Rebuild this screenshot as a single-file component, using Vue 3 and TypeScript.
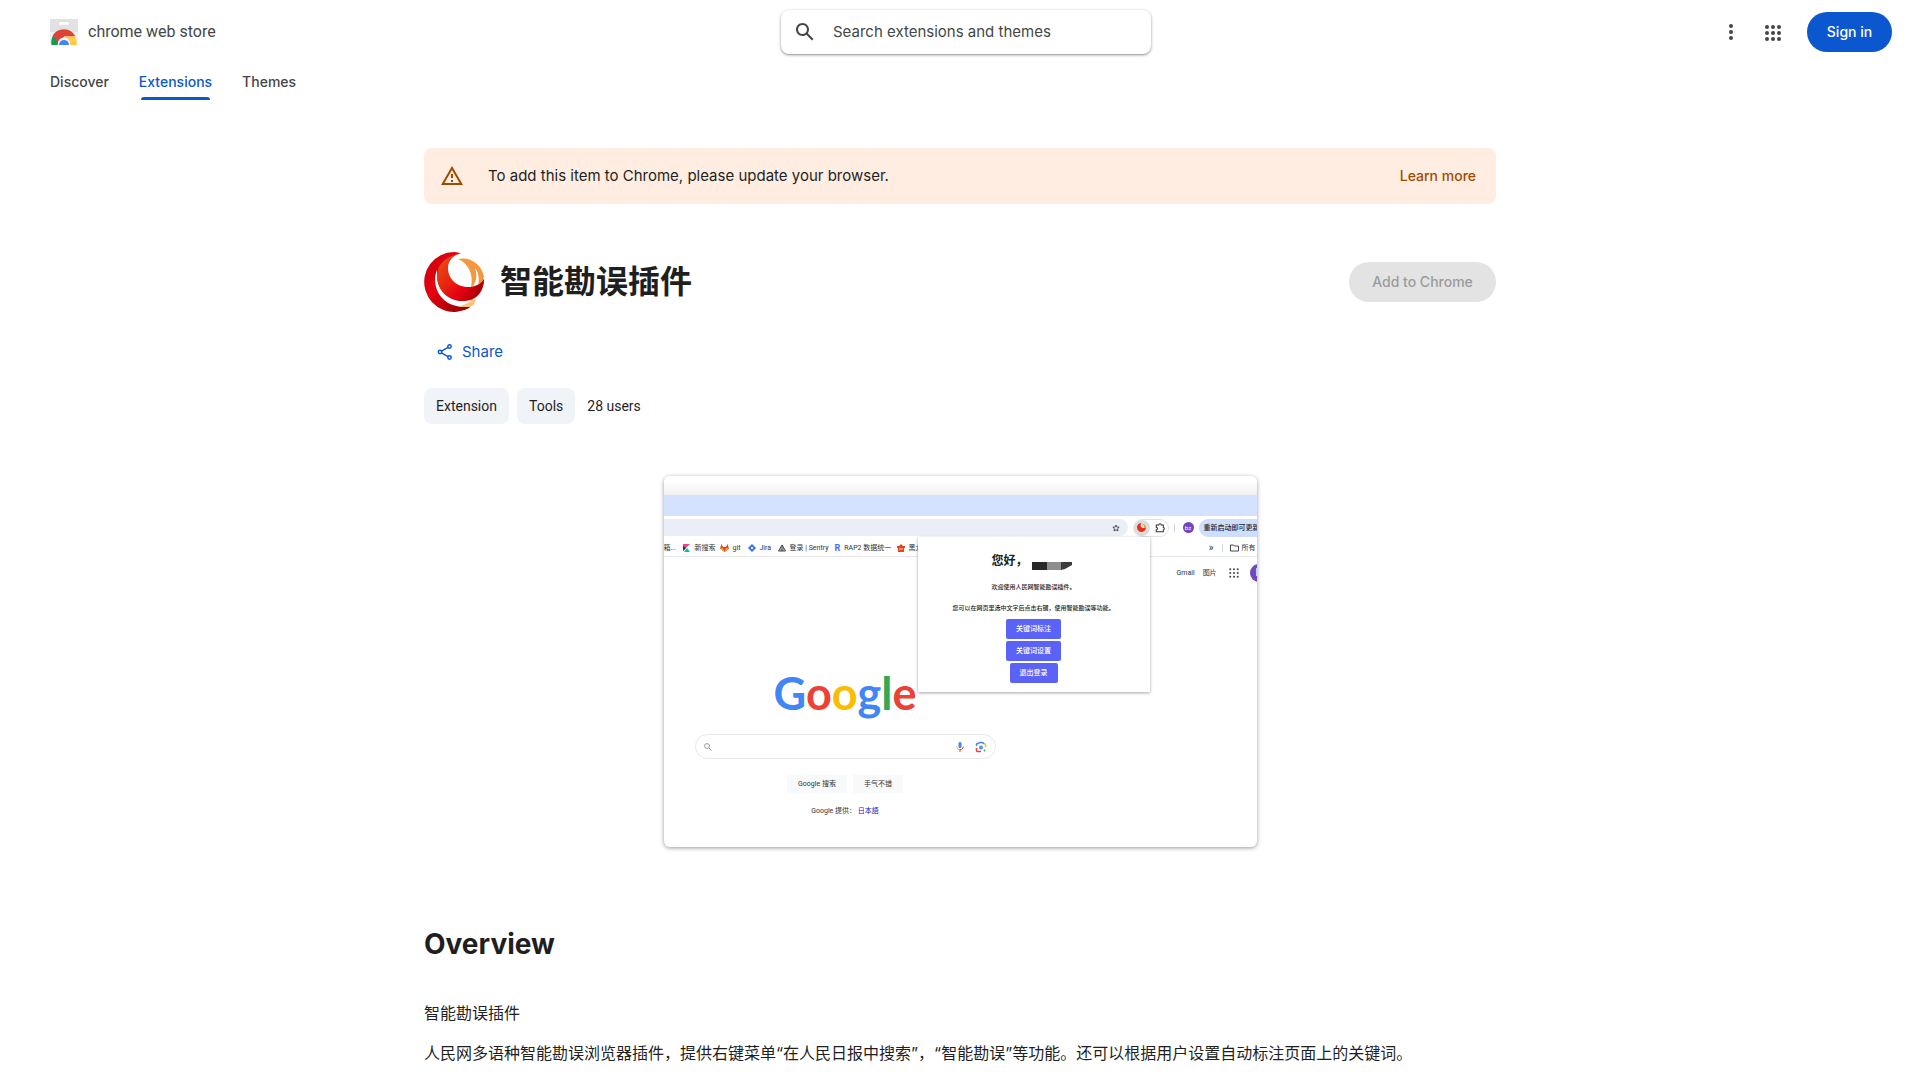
<script setup lang="ts">
interface Tab { label: string; active: boolean }

const tabs: Tab[] = [
  { label: 'Discover', active: false },
  { label: 'Extensions', active: true },
  { label: 'Themes', active: false },
]

const popupActions: string[] = ['关键词标注', '关键词设置', '退出登录']
const dots: number[] = [6, 12, 18]
</script>

<template>
  <div class="page">
    <header class="header">
      <div class="bar">
        <a class="brand" href="#">
          <svg width="28" height="26" viewBox="0 0 28 26" aria-hidden="true">
            <path d="M0 0h28v24a2 2 0 0 1-2 2H2a2 2 0 0 1-2-2z" fill="#f1f1f1" />
            <path d="M0 0h28v13H0z" fill="#e2e2e2" />
            <rect x="9" y="3" width="10" height="3" rx="1.5" fill="#fff" />
            <path d="M2.500 17A13 13 0 0 1 25.500 17.500H14L8 26z" fill="#db4437" />
            <path d="M3.200 16.500 9 26H1.500a13 13 0 0 1 1.700-9.500z" fill="#0f9d58" />
            <path d="M14 17.500h11.100a13 13 0 0 1 1.400 8.500H14z" fill="#ffcd40" />
            <path d="M7.800 26a6.300 6.300 0 1 1 12.400 0z" fill="#f1f1f1" />
            <path d="M9 26a5 5 0 1 1 10 0z" fill="#4285f4" />
          </svg>
          <span>chrome web store</span>
        </a>
        <label class="search">
          <svg width="24" height="24" viewBox="0 0 24 24" aria-hidden="true">
            <path fill="#444746" d="M20.490 19l-5.730-5.730C15.530 12.200 16 10.910 16 9.500 16 5.910 13.090 3 9.500 3S3 5.910 3 9.500 5.910 16 9.500 16c1.410 0 2.700-.470 3.770-1.240L19 20.490 20.490 19zM5 9.500C5 7.010 7.010 5 9.500 5S14 7.010 14 9.500 11.990 14 9.500 14 5 11.990 5 9.500z" />
          </svg>
          <input type="text" placeholder="Search extensions and themes" aria-label="Search extensions and themes">
        </label>
        <div class="actions">
          <button class="icon-button" type="button" aria-label="More options">
            <svg width="24" height="24" viewBox="0 0 24 24"><circle v-for="y in dots" :key="y" cx="12" :cy="y" r="2" /></svg>
          </button>
          <button class="icon-button" type="button" aria-label="Google apps">
            <svg width="24" height="24" viewBox="0 0 24 24">
              <template v-for="y in dots" :key="y"><circle v-for="x in dots" :key="x" :cx="x" :cy="y + 1" r="2" /></template>
            </svg>
          </button>
          <a class="sign-in" href="#">Sign in</a>
        </div>
      </div>
      <nav class="tabs">
        <a v-for="tab in tabs" :key="tab.label" href="#" :class="{ active: tab.active }">{{ tab.label }}</a>
      </nav>
    </header>

    <main class="content">
      <section class="banner">
        <svg width="24" height="24" viewBox="0 0 24 24" aria-hidden="true">
          <path fill="#a14b00" d="M12 5.990 19.530 19H4.470L12 5.990M12 2 1 21h22L12 2zm1 14h-2v2h2v-2zm0-6h-2v4h2v-4z" />
        </svg>
        <p>To add this item to Chrome, please update your browser.</p>
        <a href="#">Learn more</a>
      </section>

      <section class="item-head">
        <svg class="item-icon" width="60" height="60" viewBox="0 0 60 60" aria-hidden="true">
          <defs>
            <linearGradient id="ball" x1="0" y1="0" x2="1" y2="1">
              <stop offset="0" stop-color="#c4000f" /><stop offset=".4" stop-color="#e60012" /><stop offset="1" stop-color="#8c0000" />
            </linearGradient>
            <linearGradient id="flame" x1="0" y1="0" x2="1" y2="1">
              <stop offset="0" stop-color="#ea5514" /><stop offset=".45" stop-color="#e6210f" /><stop offset=".65" stop-color="#e60012" /><stop offset="1" stop-color="#8c0000" />
            </linearGradient>
          </defs>
          <path fill="url(#ball)" d="M37 1.500Q34 0 30 0A30 30 0 1 0 46 55.500L39 49C25 40 21 22 24 12 27 5 32 2 37 1.500z" />
          <path fill="#fff" d="M13 18C9 27 11 40 20 48 27 54 36 56 46 54L52 49 39 49C26 49 14 40 13 24z" />
          <path fill="url(#flame)" d="M37 1.500C24 3 13 11 13 24 13 39 25 49 39 49 50 49 60 41 60 27 56 33 50 35 44 35 32 35 24 26 24 16 24 8 29 3 37 1.500z" />
          <path fill="#f3983f" d="M34 7C47 4 58 13 60 25 59 29 57 31 54 33 56 26 54 20 51 16 53 22 53 29 49 34L47 35C50 22 44 11 34 7z" />
          <path fill="#f8c47d" d="M52 47C51 51 49 54 46 55L33 55C41 53 46 50 48 48z" />
          <path fill="#a80008" opacity=".65" d="M60 27C60 39 54 46 45 49 50 44 52 39 52 34 56 32 58 30 60 27z" />
        </svg>
        <h1>智能勘误插件</h1>
        <button class="add" type="button" disabled>Add to Chrome</button>
      </section>

      <button class="share" type="button">
        <svg width="18" height="18" viewBox="0 0 18 18" fill="none" stroke="#0b57d0" stroke-width="1.500" aria-hidden="true">
          <circle cx="13.500" cy="3.500" r="1.700" /><circle cx="4" cy="9" r="1.700" /><circle cx="13.500" cy="14.500" r="1.700" />
          <path d="M5.500 8.100 12 4.400M5.500 9.900 12 13.600" />
        </svg>
        Share
      </button>

      <div class="meta">
        <a class="chip" href="#">Extension</a>
        <a class="chip" href="#">Tools</a>
        <span class="users">28 users</span>
      </div>

      <figure class="shot">
        <div class="shot-title"></div>
        <div class="shot-strip"></div>
        <div class="shot-toolbar">
          <div class="omnibox">
            <svg width="8" height="8" viewBox="0 0 24 24"><path fill="none" stroke="#333" stroke-width="2.500" d="m12 3 2.700 6.200 6.700.600-5 4.500 1.500 6.600L12 17.400l-5.900 3.500 1.500-6.600-5-4.500 6.700-.600z" /></svg>
          </div>
          <div class="ext">
            <span class="ext-on">
              <svg width="9" height="9" viewBox="0 0 60 60"><path fill="#e6301c" d="M30 0a30 30 0 1 0 30 28c-8 10-36 8-36-12C24 8 26 3 30 0z" /><path fill="#f3983f" d="M34 7c14-3 25 7 26 20-3 5-8 8-13 8 3-13-3-24-13-28z" /></svg>
            </span>
            <svg width="10" height="10" viewBox="0 0 24 24"><path fill="none" stroke="#333" stroke-width="2.500" d="M3 5h6c0-4 6-4 6 0h5v6c3 0 3 6 0 6v4H3v-5c4 0 4-6 0-6z" /></svg>
          </div>
          <i class="rule"></i>
          <span class="avatar">bz</span>
          <span class="relaunch">重新启动即可更新</span>
        </div>
        <div class="shot-marks">
          <span class="mark first">箱...</span>
          <span class="mark w-search"><svg width="8" height="8" viewBox="0 0 8 8"><path fill="#e8488b" d="M0 0h7L0 7z" /><path fill="#333" d="M0 2l3 2-3 3z" /><path fill="#00bfb3" d="M1 8 4 4l3 4z" /></svg>新搜索</span>
          <span class="mark w-git"><svg width="9" height="8" viewBox="0 0 9 8"><path fill="#e24329" d="M1.500 0 3 3h3l1.500-3L9 4.500 4.500 8 0 4.500z" /><path fill="#fca326" d="M0 4.500 3 4l1.500 4L6 4l3 .5L4.500 8z" /></svg>git</span>
          <span class="mark w-jira"><svg width="8" height="8" viewBox="0 0 8 8"><path fill="#2f6df6" fill-rule="evenodd" d="m4 0 4 4-4 4-4-4zm0 2.500L2.500 4 4 5.500 5.500 4z" /></svg>Jira</span>
          <span class="mark w-sentry"><svg width="8" height="8" viewBox="0 0 8 8"><path fill="#777" stroke="#444" d="M4 1 7.500 7h-7z" /><path stroke="#eee" d="M2 7c0-2 1-3 2-3s2 1 2 3" fill="none" stroke-width=".5" /></svg>登录 | Sentry</span>
          <span class="mark w-rap"><b>R</b>RAP2 数据统一</span>
          <span class="mark"><svg width="8" height="8" viewBox="0 0 8 8"><path fill="#e5451f" d="M0 2h2l2-2 2 2h2v2H0zM1 4h6v4H1z" /><path d="M2 5h4" stroke="#ffd27a" /></svg>黑龙</span>
          <span class="mark more">»</span>
          <i class="rule"></i>
          <span class="mark folder"><svg width="9" height="8" viewBox="0 0 9 8"><path fill="none" stroke="#444" d="M.5 1h3l1 1h4v5h-8z" /></svg>所有</span>
        </div>
        <div class="shot-links">
          <span>Gmail</span><span>图片</span>
          <svg width="10" height="10" viewBox="0 0 24 24"><template v-for="y in dots" :key="y"><circle v-for="x in dots" :key="x" :cx="x * 1.5 - 6" :cy="y * 1.5 - 6" r="2.400" fill="#444" /></template></svg>
          <span class="avatar big">b</span>
        </div>
        <div class="home">
          <div class="google"><span>G</span><span>o</span><span>o</span><span>g</span><span>l</span><span>e</span></div>
          <div class="home-search">
            <svg width="8" height="8" viewBox="0 0 8 8"><circle cx="3" cy="3" r="2.400" fill="none" stroke="#999" /><path d="m5 5 2.500 2.500" stroke="#999" /></svg>
            <svg class="mic" width="8" height="12" viewBox="0 0 8 12"><rect x="2.500" y="1" width="3" height="6" rx="1.500" fill="#4285f4" /><path d="M.7 5.500C1 8 2.500 8.700 4 8.700" fill="none" stroke="#f4b400" /><path d="M7.300 5.500C7 8 5.500 8.700 4 8.700V11" fill="none" stroke="#ea4335" /></svg>
            <svg width="12" height="12" viewBox="0 0 12 12" fill="none" stroke-width="1.500"><path d="M1.500 5V3.500q0-1 1-1h1L4.500 1.500h3l1 1h.5" stroke="#4285f4" /><path d="M1.500 7v2.500q0 1 1 1H6" stroke="#ea4335" /><path d="M9 2.500q1.500 0 1.500 1V6" stroke="#fbbc04" /><circle cx="6" cy="6.500" r="1.200" stroke="#4285f4" /><circle cx="9.500" cy="9.500" r="1" fill="#34a853" /></svg>
          </div>
          <div class="home-buttons"><span>Google 搜索</span><span>手气不错</span></div>
          <p class="home-lang">Google 提供： <span>日本語</span></p>
        </div>
        <div class="popup">
          <div class="hello">您好，<svg width="40" height="8" viewBox="0 0 40 8"><path fill="#292929" d="M0 0h15v8H0z" /><path fill="#8e8e8e" d="M15 0h14v8H15z" /><path fill="#3c3c3c" d="M29 0h11v3l-7 4-4 1z" /></svg></div>
          <p>欢迎使用人民网智能勘误插件。</p>
          <p>您可以在网页里选中文字后点击右键，使用智能勘误等功能。</p>
          <button v-for="action in popupActions" :key="action" type="button">{{ action }}</button>
        </div>
      </figure>

      <section class="overview">
        <h2>Overview</h2>
        <p>智能勘误插件</p>
        <p>人民网多语种智能勘误浏览器插件，提供右键菜单“在人民日报中搜索”，“智能勘误”等功能。还可以根据用户设置自动标注页面上的关键词。</p>
      </section>
    </main>
  </div>
</template>

<style>
body { margin: 0; background: #fff; }
</style>

<style scoped>
.page {
  font-family: Inter, "Noto Sans CJK SC", sans-serif;
  color: #1f1f1f;
  font-size: 16px;
  line-height: 24px;
}
.page * { box-sizing: border-box; }
a { color: inherit; text-decoration: none; }
button, input { font: inherit; border: 0; background: none; padding: 0; }
p, h1, h2, figure { margin: 0; }
svg { flex: none; display: block; }

.brand, .meta, .shot { font-family: Roboto, "Noto Sans CJK SC", sans-serif; }

.bar {
  display: grid;
  grid-template-columns: 1fr 370px 1fr;
  align-items: center;
  height: 64px;
  padding: 0 28px 0 40px;
}
.brand { display: flex; align-items: center; gap: 10px; padding-left: 10px; color: #444746; }
.search {
  display: flex;
  align-items: center;
  gap: 16px;
  height: 44px;
  padding: 0 12px;
  border-radius: 8px;
  box-shadow: 0 1px 2px rgba(0, 0, 0, .3), 0 1px 3px 1px rgba(0, 0, 0, .12);
}
.search input { flex: 1; min-width: 0; outline: 0; font-size: 15px; }
.search input::placeholder { color: #444746; opacity: 1; }
.actions { display: flex; align-items: center; justify-content: flex-end; }
.icon-button { width: 42px; height: 40px; display: grid; place-items: center; fill: #444746; }
.sign-in {
  width: 85px;
  line-height: 40px;
  margin-left: 13px;
  border-radius: 20px;
  background: #0b57d0;
  color: #fff;
  font-size: 14px;
  font-weight: 500;
  text-align: center;
}
.tabs { display: flex; gap: 30px; height: 36px; padding-left: 50px; font-size: 14px; font-weight: 500; color: #444746; }
.tabs a { position: relative; line-height: 36px; }
.tabs .active { color: #0b57d0; }
.tabs .active::after {
  content: "";
  position: absolute;
  left: 2px;
  right: 2px;
  bottom: 0;
  height: 3px;
  border-radius: 3px 3px 0 0;
  background: #0b57d0;
}

.content { max-width: 1072px; margin: 0 auto; padding-top: 48px; }
.banner {
  display: flex;
  align-items: center;
  height: 56px;
  padding: 0 20px 0 16px;
  border-radius: 8px;
  background: #ffede1;
}
.banner p { flex: 1; margin-left: 24px; font-size: 15px; }
.banner a { color: #a14b00; font-size: 14px; font-weight: 500; }

.item-head { display: flex; align-items: center; gap: 16px; margin-top: 48px; }
.item-head h1 { flex: 1; font-size: 32px; line-height: 40px; font-weight: 700; }
.add {
  width: 147px;
  height: 40px;
  border-radius: 20px;
  background: #e3e3e3;
  color: #9b9b9b;
  font-size: 14px;
  font-weight: 500;
}
.share { display: flex; align-items: center; gap: 8px; height: 40px; margin-top: 20px; padding: 0 12px; color: #0b57d0; font-size: 15px; }
.meta { display: flex; align-items: center; gap: 8px; margin-top: 16px; font-size: 14px; }
.chip { padding: 0 12px; line-height: 36px; border-radius: 8px; background: #f0f4f9; }
.users { margin-left: 4px; }

.shot {
  position: relative;
  width: 593px;
  height: 371px;
  margin: 52px auto 0;
  overflow: hidden;
  border-radius: 6px;
  background: #fff;
  box-shadow: 0 1px 4px rgba(0, 0, 0, .4);
  font-size: 6px;
  line-height: 10px;
  color: #333;
}
.shot-title { height: 19px; background: linear-gradient(#fff 30%, #f0f0f0); }
.shot-strip { height: 21px; background: #d5e2ff; }
.shot-toolbar { display: flex; align-items: center; height: 23px; }
.omnibox {
  width: 464px;
  height: 17px;
  padding-right: 8px;
  display: flex;
  align-items: center;
  justify-content: flex-end;
  border-radius: 0 9px 9px 0;
  background: #e9eef8;
}
.ext { display: flex; align-items: center; gap: 5px; width: 36px; height: 18px; margin-left: 5px; border-radius: 9px; border: 1px solid #e3e3e3; }
.ext-on { display: grid; place-items: center; width: 16px; height: 16px; border-radius: 50%; background: #dcdcdc; }
.rule { width: 1px; height: 8px; background: #c9d4ea; }
.shot-toolbar .rule { margin: 0 8px 0 5px; }
.avatar { display: grid; place-items: center; width: 11px; height: 11px; border-radius: 50%; background: #7147bd; color: #fff; }
.relaunch { flex: 1; margin-left: 5px; padding-left: 5px; height: 18px; line-height: 18px; border-radius: 9px 0 0 9px; background: #cfdefd; color: #223; white-space: nowrap; overflow: hidden; font-weight: 500; font-size: 7px; }
.shot-marks { display: flex; align-items: center; height: 18px; border-bottom: 1px solid #e8e8e8; }
.mark { display: flex; align-items: center; gap: 4px; flex: none; white-space: nowrap; }
.mark, .shot-links { font-size: 7px; }
.first { width: 19px; }
.w-search { width: 37px; }
.w-git { width: 28px; }
.w-jira { width: 30px; }
.w-sentry { width: 57px; }
.w-rap { width: 62px; }
.w-rap b { color: #3f6df0; font-size: 9px; }
.more { margin-left: auto; margin-right: 8px; font-size: 10px; }
.folder { width: 34px; padding-left: 7px; gap: 3px; }
.shot-links { display: flex; align-items: center; height: 32px; gap: 8px; padding-left: 513px; }
.shot-links > * { flex: none; }
.shot-links svg { margin-left: 4px; }
.shot-links .big { width: 18px; height: 18px; margin-left: 3px; font-size: 11px; }
.home { width: 301px; margin: 74px 0 0 31px; display: flex; flex-direction: column; align-items: center; }
.google { font-family: Lato, sans-serif; font-weight: 700; font-size: 45px; line-height: 60px; }
.google span { color: #4285f4; }
.google span:nth-child(2), .google span:nth-child(6) { color: #ea4335; }
.google span:nth-child(3) { color: #fbbc04; }
.google span:nth-child(5) { color: #34a853; }
.home-search { display: flex; align-items: center; gap: 11px; align-self: stretch; height: 25px; margin-top: 11px; padding: 0 8px; border: 1px solid #e8e8ea; border-radius: 13px; }
.mic { margin-left: auto; }
.home-buttons { display: flex; gap: 6px; margin-top: 16px; font-size: 7px; }
.home-buttons span { padding: 0 11px; line-height: 18px; background: #f8f9fa; }
.home-lang { margin-top: 13px; font-size: 7px; }
.home-lang span { color: #1a0dab; }
.popup {
  position: absolute;
  top: 61px;
  left: 254px;
  width: 232px;
  height: 155px;
  padding-top: 15px;
  display: flex;
  flex-direction: column;
  align-items: center;
  background: #fff;
  box-shadow: 0 1px 3px rgba(0, 0, 0, .35);
  color: #222;
  font-weight: 500;
}
.hello { display: flex; align-items: flex-end; gap: 4px; margin-bottom: 1px; padding-right: 4px; font-size: 12px; line-height: 18px; font-weight: 700; }
.popup p { line-height: 11px; margin-top: 10px; }
.popup p + button { margin-top: 6px; }
.popup button { height: 20px; margin-top: 2px; padding: 0 10px; border-radius: 2px; background: #5b63f6; color: #fff; font-size: 7px; }

.overview { padding-bottom: 16px; }
.overview h2 { margin-top: 77px; font-size: 28px; line-height: 40px; font-weight: 700; }
.overview p { margin-top: 16px; }
.overview h2 + p { margin-top: 37px; }
</style>
